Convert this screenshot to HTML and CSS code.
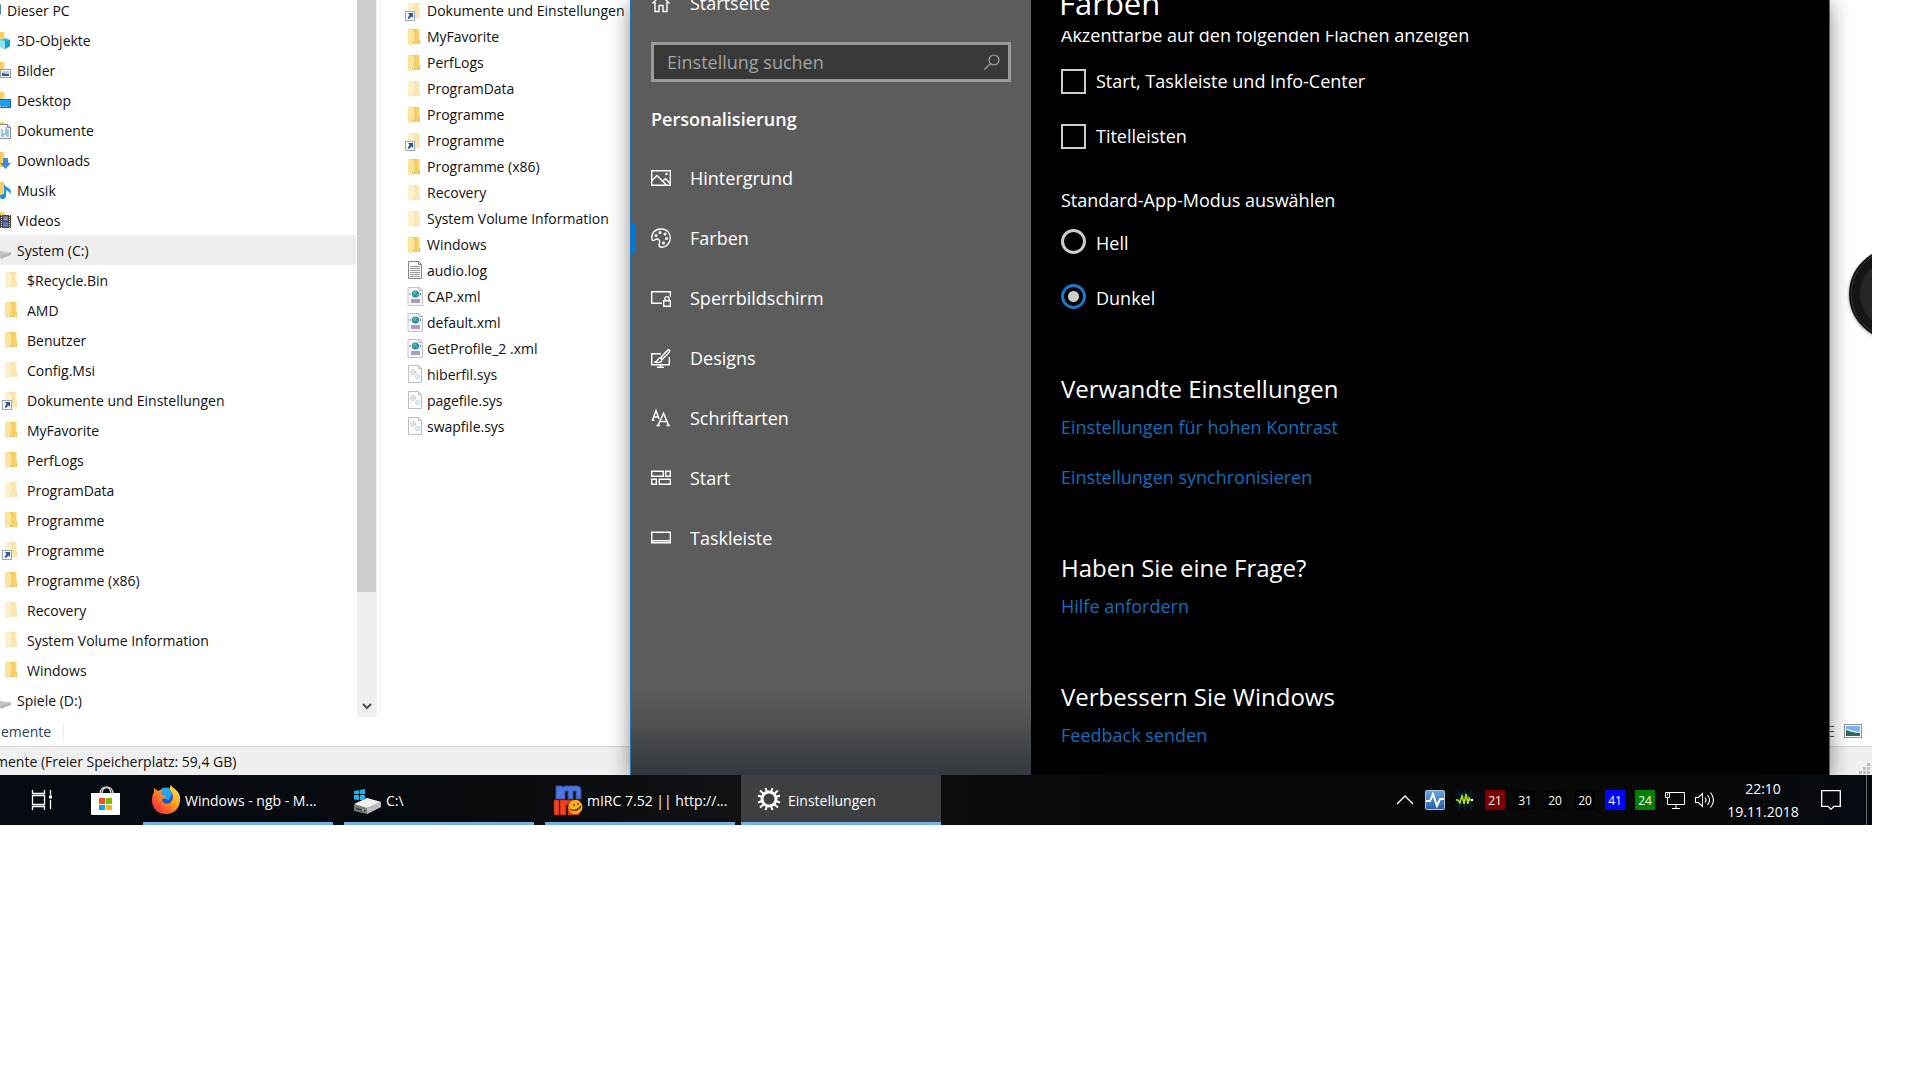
FILE: index.html
```html
<!DOCTYPE html>
<html lang="de">
<head>
    <meta charset="utf-8">
    <meta name="viewport" content="width=device-width, initial-scale=1.0">
    <title>Einstellungen</title>
    <link rel="stylesheet" href="styles.css">
</head>
<body>
    <!-- shared icons -->
    <svg class="defs" aria-hidden="true">
        <linearGradient id="gFolder" x1="0" x2="1"><stop offset="0" stop-color="#eec25a"/><stop offset="1" stop-color="#fbd772"/></linearGradient>
        <linearGradient id="gFox" x1="1" y1="0" x2="0" y2="1"><stop offset="0" stop-color="#fff44f"/><stop offset=".4" stop-color="#ffa41c"/><stop offset=".75" stop-color="#ff4a2f"/><stop offset="1" stop-color="#e31587"/></linearGradient>
        <linearGradient id="gDrive" x1="0" x2="1"><stop offset="0" stop-color="#9c9c9c"/><stop offset="1" stop-color="#e6e6e6"/></linearGradient>
        <linearGradient id="gMonitor" x1="0" y1="0" x2="0" y2="1"><stop offset="0" stop-color="#6ba7df"/><stop offset="1" stop-color="#1f5fa8"/></linearGradient>
        <symbol id="folder" viewBox="0 0 20 20">
            <path d="M8 2h7.500v9l.5 2v4H8z" fill="url(#gFolder)"/><path d="M15 12l1 1v4h-1z" fill="#f0c04c"/>
            <path d="M4 2h4.500l2 3v9L9 17v-3l-2 1v3.500L4 17z" fill="#fce49a"/>
        </symbol>
        <symbol id="arrow" viewBox="0 0 20 20">
            <rect x="1.500" y="10.500" width="9" height="9" fill="#fff" stroke="#9aa7b5"/>
            <path d="M4 12h5v5l-1.500-1.500L5 18l-1.500-1 2-3z" fill="#2a5ca0"/>
        </symbol>
        <symbol id="drive" viewBox="0 0 20 20">
            <path d="M0 13l9-2 11 1v2l-10 4-10-1z" fill="url(#gDrive)"/><path d="M10 15l10-3v3l-10 4z" fill="#b8b8b8"/>
        </symbol>
        <symbol id="pc" viewBox="0 0 20 20"><rect y="5" width="20" height="9" fill="#3d9bd6" stroke="#56697a"/></symbol>
        <symbol id="cube" viewBox="0 0 20 20">
            <use href="#folder" x="-2"/><path d="M9 10l6-2 4 2v6l-5 3-5-2z" fill="#2fc0dc"/><path d="M9 10l5 1v8l-5-2z" fill="#8fe3f0"/><path d="M14 11l5-1v6l-5 3z" fill="#1a9fbf"/>
        </symbol>
        <symbol id="pics" viewBox="0 0 20 20">
            <use href="#folder" x="-2"/><rect x="9.500" y="9.500" width="10" height="8" fill="#fff" stroke="#999"/><rect x="11" y="11" width="7" height="5" fill="#a9d2f2"/><path d="M11 13l4 1h3v2h-7z" fill="#2a5d8a"/>
        </symbol>
        <symbol id="desk" viewBox="0 0 20 20">
            <use href="#folder" x="-2"/><rect x="7.500" y="9.500" width="12" height="8" fill="#1a9dfc" stroke="#0a6bb5"/><path d="M9 16.500h8" stroke="#fff" stroke-dasharray="1 2"/>
        </symbol>
        <symbol id="docs" viewBox="0 0 20 20">
            <use href="#folder" x="-2"/><path d="M8.500 4.500h8l3 3v11h-11z" fill="#fff" stroke="#8c8c8c"/><path d="M16.500 4.500v3h3" fill="none" stroke="#8c8c8c"/>
            <path d="M10 10h2m2 0h4M10 12h2m2 0h4M10 14h8M10 16h3m2 0h3M14 8h2" stroke="#2a8fd0"/>
        </symbol>
        <symbol id="down" viewBox="0 0 20 20"><use href="#folder" x="-2"/><path d="M12 8h5v5h3l-5.500 6L9 13h3z" fill="#3b8de0"/></symbol>
        <symbol id="music" viewBox="0 0 20 20"><use href="#folder" x="-2"/><path d="M13 4c1 3 6 4 7 7l-1 4c0-3-2-4-4-5v6c0 4-6 4-6 1s3-3 4-3z" fill="#1494e6"/></symbol>
        <symbol id="video" viewBox="0 0 20 20">
            <use href="#folder" x="-2"/><rect x="9" y="5" width="11" height="13" fill="#444"/><path d="M10.500 5v13M18.500 5v13" stroke="#ddd" stroke-dasharray="1 1"/><path d="M12 6h5v5h-5zM12 12h5v5h-5z" fill="#5877c0"/><path d="M13 9l3-2v3z" fill="#dba53a"/>
        </symbol>
        <symbol id="log" viewBox="0 0 20 20">
            <path d="M4.500.5h10l3 3v14h-13z" fill="#fcfcfc" stroke="#848484"/><path d="M14.500.5v3h3" fill="none" stroke="#848484"/><path d="M6 5.500h10M6 7.500h10M6 9.500h10M6 11.500h10M6 13.500h10M6 15.500h10" stroke="#9b9b9b"/>
        </symbol>
        <symbol id="xml" viewBox="0 0 20 20">
            <path d="M4 .5h11l3.500 3v15H4z" fill="#f7f7fb" stroke="#c3c3cc"/><path d="M15 .5v3h3.500" fill="none" stroke="#b5b5b5"/>
            <circle cx="11.500" cy="7" r="3.600" fill="#2385b8"/><path d="M9 5l3-1 1 2-3 3zM12 8l2-1v3z" fill="#54c07a"/>
            <path d="M6.500 6l-1 1 1 1M16 6l1 1-1 1" fill="none" stroke="#777"/><path d="M7 12h9v4H7z" fill="#a99fb8"/>
        </symbol>
        <symbol id="sys" viewBox="0 0 20 20">
            <path d="M4.500.5h10l3 3v14h-13z" fill="#fcfcfc" stroke="#bdbdbd"/><path d="M14.500.5v3h3" fill="none" stroke="#bdbdbd"/>
            <circle cx="9" cy="7" r="2.500" fill="#f0f0f0" stroke="#a9b2bb" stroke-dasharray="1 .6"/><circle cx="9" cy="7" r=".8" fill="#a9b2bb"/><circle cx="13.500" cy="11.500" r="2" fill="#e7f0f7" stroke="#a9bccb" stroke-dasharray="1 .6"/>
        </symbol>
    </svg>

    <div class="screen">
        <div class="desktop">
            <div class="explorer">
                <div class="panes">
                    <ul class="tree">
                        <li class="l0"><svg><use href="#pc"/></svg>Dieser PC</li>
                        <li class="l1"><svg><use href="#cube"/></svg>3D-Objekte</li>
                        <li class="l1"><svg><use href="#pics"/></svg>Bilder</li>
                        <li class="l1"><svg><use href="#desk"/></svg>Desktop</li>
                        <li class="l1"><svg><use href="#docs"/></svg>Dokumente</li>
                        <li class="l1"><svg><use href="#down"/></svg>Downloads</li>
                        <li class="l1"><svg><use href="#music"/></svg>Musik</li>
                        <li class="l1"><svg><use href="#video"/></svg>Videos</li>
                        <li class="l1 selected"><svg><use href="#drive"/></svg>System (C:)</li>
                        <li><svg><use href="#folder" class="dim"/></svg>$Recycle.Bin</li>
                        <li><svg><use href="#folder"/></svg>AMD</li>
                        <li><svg><use href="#folder"/></svg>Benutzer</li>
                        <li><svg><use href="#folder" class="dim"/></svg>Config.Msi</li>
                        <li><svg><use href="#folder" class="dim"/><use href="#arrow"/></svg>Dokumente und Einstellungen</li>
                        <li><svg><use href="#folder"/></svg>MyFavorite</li>
                        <li><svg><use href="#folder"/></svg>PerfLogs</li>
                        <li><svg><use href="#folder" class="dim"/></svg>ProgramData</li>
                        <li><svg><use href="#folder"/></svg>Programme</li>
                        <li><svg><use href="#folder" class="dim"/><use href="#arrow"/></svg>Programme</li>
                        <li><svg><use href="#folder"/></svg>Programme (x86)</li>
                        <li><svg><use href="#folder" class="dim"/></svg>Recovery</li>
                        <li><svg><use href="#folder" class="dim"/></svg>System Volume Information</li>
                        <li><svg><use href="#folder"/></svg>Windows</li>
                        <li class="l1"><svg><use href="#drive"/></svg>Spiele (D:)</li>
                    </ul>
                    <div class="scrollbar">
                        <div class="thumb"></div>
                        <button class="scroll-down" aria-label="Nach unten"><svg viewBox="0 0 10 8"><path d="M1 1l4 4 4-4" fill="none" stroke="#505050" stroke-width="2"/></svg></button>
                    </div>
                    <ul class="files">
                        <li><svg><use href="#folder" class="dim"/><use href="#arrow"/></svg>Dokumente und Einstellungen</li>
                        <li><svg><use href="#folder"/></svg>MyFavorite</li>
                        <li><svg><use href="#folder"/></svg>PerfLogs</li>
                        <li><svg><use href="#folder" class="dim"/></svg>ProgramData</li>
                        <li><svg><use href="#folder"/></svg>Programme</li>
                        <li><svg><use href="#folder" class="dim"/><use href="#arrow"/></svg>Programme</li>
                        <li><svg><use href="#folder"/></svg>Programme (x86)</li>
                        <li><svg><use href="#folder" class="dim"/></svg>Recovery</li>
                        <li><svg><use href="#folder" class="dim"/></svg>System Volume Information</li>
                        <li><svg><use href="#folder"/></svg>Windows</li>
                        <li><svg><use href="#log"/></svg>audio.log</li>
                        <li><svg><use href="#xml"/></svg>CAP.xml</li>
                        <li><svg><use href="#xml"/></svg>default.xml</li>
                        <li><svg><use href="#xml"/></svg>GetProfile_2 .xml</li>
                        <li><svg><use href="#sys"/></svg>hiberfil.sys</li>
                        <li><svg><use href="#sys"/></svg>pagefile.sys</li>
                        <li><svg><use href="#sys"/></svg>swapfile.sys</li>
                    </ul>
                </div>
                <div class="count">
                    <span class="count-text">emente</span>
                    <svg class="views" viewBox="0 0 36 16">
                        <path d="M0 2.500h6M0 7.500h6M0 12.500h6" stroke="#555"/>
                        <rect x="16.500" y=".5" width="17" height="13" fill="#fff" stroke="#8b95a0"/><rect x="18" y="2" width="14" height="10" fill="#7db4ee"/><path d="M18 5c5 0 8 3 14 3v1H18z" fill="#e5f2fb"/><path d="M18 6c4 1 8 3 14 3v3H18z" fill="#2f6a5e"/>
                    </svg>
                </div>
                <div class="status">
                    <span class="status-text">mente (Freier Speicherplatz: 59,4 GB)</span>
                    <svg class="grip" viewBox="0 0 12 12"><path d="M9 0h3v3H9zM5 4h3v3H5zM9 4h3v3H9zM1 8h3v3H1zM5 8h3v3H5zM9 8h3v3H9z" fill="#bdbdbd"/></svg>
                </div>
            </div>

            <div class="gadget"></div>

            <div class="settings">
                <nav class="nav">
                    <a href="#" class="nav-item"><svg viewBox="0 0 20 20"><path d="M1.500 10.500L10 2l8.500 8.500M4 9v9.500h4v-6h4v6h4V9"/></svg>Startseite</a>
                    <div class="search">
                        <input type="text" placeholder="Einstellung suchen" aria-label="Einstellung suchen">
                        <svg viewBox="0 0 16 16"><circle cx="10" cy="6" r="5"/><path d="M6.300 9.700L.5 15.500"/></svg>
                    </div>
                    <h3>Personalisierung</h3>
                    <a href="#" class="nav-item"><svg viewBox="0 0 20 20"><path d="M.7 2.700h18.600v14.600H.7zM1 12.500l5-5 9.500 9.500M12 13l2.500-2.500 4.500 5"/><circle cx="15.500" cy="6" r=".6"/></svg>Hintergrund</a>
                    <a href="#" class="nav-item active"><svg viewBox="0 0 20 20"><path d="M1 11C0 5 4 1 10 1s9.300 4 9.300 9-4 9.300-8.300 9.300c-4 0-3-3-2.500-4.500.6-2-.8-3.800-2.500-3.800S3 13 1.800 12.600C1.200 12.300 1 12 1 11z"/><circle cx="5" cy="7.500" r=".8"/><circle cx="9" cy="4.500" r=".8"/><circle cx="14" cy="6" r=".8"/><circle cx="15.500" cy="10.500" r=".8"/><circle cx="12.500" cy="15" r=".8"/></svg>Farben</a>
                    <a href="#" class="nav-item"><svg viewBox="0 0 20 20"><path d="M11 15.300H.7V3.700h18.600v5M12.700 12.700h6.600v5.600h-6.600zM14 12.500v-2c0-2.500 4-2.500 4 0v2"/></svg>Sperrbildschirm</a>
                    <a href="#" class="nav-item"><svg viewBox="0 0 20 20"><path d="M10 5.700H.7v11h17.600V9M9.500 17v2M6 19.300h7M18.500 2c-1-1-2 0-9 8l1.500 1.500C18 5 19.500 3 18.500 2zM9.300 10c-3 0-2 3-5 4 3 1 6.500.5 6.700-2.500"/></svg>Designs</a>
                    <a href="#" class="nav-item"><svg viewBox="0 0 20 20"><path d="M1.500 12L5 2.500 8 11M.8 12.300h2.500M3 9h4M7 17.300l5.500-12 5 12M5.500 17.500h3.500M15.500 17.500h3.500M9 13.500h6.500M13 6l4.500 11"/></svg>Schriftarten</a>
                    <a href="#" class="nav-item"><svg viewBox="0 0 20 20"><path d="M.7 3.200h11.600v5.100H.7zM14.700 3.200h4.600v5.100h-4.600zM.7 11.200h4.600v5.100H.7zM8.200 11.200h11.100v5.100H8.200z"/></svg>Start</a>
                    <a href="#" class="nav-item"><svg viewBox="0 0 20 20"><path d="M.7 4.200h18.600v10.600H.7zM1 12.700h18"/></svg>Taskleiste</a>
                </nav>
                <main class="content">
                    <h1>Farben</h1>
                    <div class="scroll">
                        <p class="lead">Akzentfarbe auf den folgenden Flächen anzeigen</p>
                        <div class="choices boxes">
                            <label><input type="checkbox"><span>Start, Taskleiste und Info-Center</span></label>
                            <label><input type="checkbox"><span>Titelleisten</span></label>
                        </div>
                        <p>Standard-App-Modus auswählen</p>
                        <div class="choices modes">
                            <label><input type="radio" name="mode"><span>Hell</span></label>
                            <label><input type="radio" name="mode" checked><span>Dunkel</span></label>
                        </div>
                        <section>
                            <h2>Verwandte Einstellungen</h2>
                            <a href="#">Einstellungen für hohen Kontrast</a>
                            <a href="#">Einstellungen synchronisieren</a>
                        </section>
                        <section>
                            <h2>Haben Sie eine Frage?</h2>
                            <a href="#">Hilfe anfordern</a>
                        </section>
                        <section>
                            <h2>Verbessern Sie Windows</h2>
                            <a href="#">Feedback senden</a>
                        </section>
                    </div>
                </main>
            </div>
        </div>

        <div class="taskbar">
            <button class="icon-btn" aria-label="Aktive Anwendungen"><svg width="22" height="22" viewBox="0 0 22 22"><path d="M1.500 1v3.500h12V1M1.500 6.500h12v9h-12zM1.500 21v-3.500h12V21M19.500 1v5M19.500 11v9" fill="none" stroke="#fff" stroke-width="1.300"/><path d="M18 6.500h3v3h-3z" fill="#fff"/></svg></button>
            <button class="icon-btn" aria-label="Store"><svg width="30" height="30" viewBox="0 0 30 30"><path d="M10 9c0-9 11-9 11 0M12 9c0-9 11-9 11 0" fill="none" stroke="#ccc" stroke-width="1.500"/><path d="M1 8h29v21q0 1-1 1H2q-1 0-1-1z" fill="#fff"/><path d="M9 13h6v6H9z" fill="#f25022"/><path d="M16 13h6v6h-6z" fill="#7fba00"/><path d="M9 20h6v5H9z" fill="#00a4ef"/><path d="M16 20h6v5h-6z" fill="#ffb900"/></svg></button>
            <button class="task"><svg viewBox="0 0 30 30"><circle cx="15" cy="14" r="11" fill="#1d56c4"/><path d="M10 4c5-3 10-1 12 3l-4 8-8-2z" fill="#24a3ee"/><path d="M20 0c1 3 8 5 9 12 1 10-5 17-14 17S1 23 1 15c0-4 1-6 2-8V3l4 3c2-1 4-1 5 0-2 1-2 3-1 4l4 1c0 2-3 2-4 4 1 4 6 5 9 2 3-4 2-8 0-11-1-2-2-3 0-6z" fill="url(#gFox)"/></svg><span>Windows - ngb - M...</span></button>
            <button class="task"><svg viewBox="0 0 30 30"><path d="M2 20l13-7 14 4v5l-14 7-13-3z" fill="#777"/><path d="M2 19l13-6 14 4-14 6z" fill="#f0f0f0"/><path d="M15 23l14-6v5l-14 7z" fill="#bcbcbc"/><path d="M4 23l9 2.500v1L4 24z" fill="#222"/><path d="M10 24h2v2h-2z" fill="#4ad35e"/><path d="M2 6l5-1v4H2zM8 5l5-1v5H8zM2 10h5v5l-5-.5zM8 10h5v5H8z" fill="#1cb5f0"/></svg><span>C:\</span></button>
            <button class="task"><svg viewBox="0 0 30 30"><path d="M3 14V1h6l1 1 2-1h13q3 1 3 4v9h-5V6h-3v8h-5V6h-3v8z" fill="#4f74dc" stroke="#2c4cad"/><path d="M1 15h5v15H1zM7 15h10v5h-4v10H7zM15 15h11v6h-6v4h6v5H15z" fill="#f0421c" stroke="#a52008" stroke-width=".7"/><circle cx="22.500" cy="22" r="7" fill="#fbb417"/><path d="M17 24q6 4 11-3M21 19v2M25 18v2" fill="none" stroke="#6b3604" stroke-width="1.500"/></svg><span>mIRC 7.52 || http://...</span></button>
            <button class="task current"><svg viewBox="0 0 30 30"><circle cx="15" cy="14" r="7" fill="none" stroke="#fff" stroke-width="3"/><path d="M11.500 3l1.500 4M18.500 3L17 7M11.500 25l1.500-4M18.500 25L17 21M4 10.500l4 1.500M4 17.500L8 16M26 10.500L22 12M26 17.500L22 16M6 5.500l4 3.500M24 5.500L20 9M6 22.500l4-3.500M24 22.500L20 19" stroke="#fff" stroke-width="2"/></svg><span>Einstellungen</span></button>

            <div class="tray">
                <button class="tray-btn" aria-label="Ausgeblendete Symbole"><svg viewBox="0 0 20 20"><path d="M2 14l8-8 8 8" fill="none" stroke="#fff" stroke-width="1.400"/></svg></button>
                <span class="tray-btn"><svg viewBox="0 0 20 20"><rect x=".5" y=".5" width="19" height="19" rx="1" fill="url(#gMonitor)" stroke="#a8c4de"/><path d="M1 11h4l3-7 4 12 3-7h4" fill="none" stroke="#fff" stroke-width="2"/></svg></span>
                <span class="tray-btn"><svg viewBox="0 0 20 20"><rect width="20" height="20" fill="#02090d"/><path d="M4 0v20M10 0v20M16 0v20M0 4h20M0 10h20M0 16h20" stroke="#0c2432"/><path d="M1 10h2l2 3 2-8 2 9 2-10 2 10 1-6 1 2h2" fill="none" stroke="#b3dd20" stroke-width="1.500"/><circle cx="17" cy="10" r="1.200" fill="#fff"/></svg></span>
                <span class="tray-btn"><b class="temp red">21</b></span>
                <span class="tray-btn"><b class="temp">31</b></span>
                <span class="tray-btn"><b class="temp">20</b></span>
                <span class="tray-btn"><b class="temp">20</b></span>
                <span class="tray-btn"><b class="temp blue">41</b></span>
                <span class="tray-btn"><b class="temp green">24</b></span>
                <button class="tray-btn" aria-label="Netzwerk"><svg viewBox="0 0 20 20"><path d="M4 2.500h15.500v12H2.500V8M.5 2.500h4v5h-4zM2.500 3.500v2M11 15v3M7 18.500h8" fill="none" stroke="#fff"/></svg></button>
                <button class="tray-btn" aria-label="Lautsprecher"><svg viewBox="0 0 20 20"><path d="M.5 7.500h3l4-4v13l-4-4h-3zM10 7.500q2 2.500 0 5M12.500 5q4 5 0 10M15.500 2.500q6 7.500 0 15" fill="none" stroke="#fff" stroke-width="1.100"/></svg></button>
                <button class="clock"><span>22:10</span><span>19.11.2018</span></button>
                <button class="notes" aria-label="Info-Center"><svg viewBox="0 0 20 20"><path d="M.7.700h18.600v15.600H13l-3 3-3-3H.7z" fill="none" stroke="#fff" stroke-width="1.300"/></svg></button>
                <button class="show-desktop" aria-label="Desktop anzeigen"></button>
            </div>
        </div>
    </div>
</body>
</html>
```
FILE: styles.css
```css
*{
    box-sizing: border-box;
}
body{
    margin: 0;
    background: #fff;
    color: #111;
    font: 14px/20px "Open Sans", "Noto Sans", sans-serif;
}
h1, h2, h3, p, ul{
    margin: 0;
    padding: 0;
}
ul{
    list-style: none;
}
button{
    border: none;
    padding: 0;
    background: none;
    color: #fff;
    font: inherit;
}
a{
    text-decoration: none;
}
.defs{
    position: absolute;
    width: 0;
    height: 0;
}
.screen{
    margin-right: 2.5%;
}
.desktop{
    position: relative;
    overflow: hidden;
    background: #fff;
}

/* explorer */
.panes{
    display: flex;
}
.panes li{
    display: flex;
    align-items: center;
    white-space: nowrap;
}
.panes li svg{
    flex: none;
    width: 20px;
    height: 20px;
}
.dim{
    opacity: .5;
}
.tree{
    width: 356px;
    margin: -5px 0 2px;
}
.tree li{
    height: 30px;
    padding: 2px 0 0 1px;
    gap: 6px;
}
.tree li svg{
    margin-bottom: 2px;
}
.tree .l1 svg{
    margin-left: -10px;
}
.tree .l0 svg{
    margin-left: -20px;
}
.tree .selected{
    background: #eee;
}
.scrollbar{
    display: flex;
    flex-direction: column;
    width: 20px;
    margin: 0 2px 0 1px;
    background: #f0f0f0;
}
.thumb{
    height: 592px;
    margin-right: 1px;
    background: #cdcdcd;
}
.scroll-down{
    height: 20px;
    margin: auto 1px 1px 0;
}
.scroll-down svg{
    width: 10px;
    height: 8px;
}
.files{
    flex: 1;
    margin-top: -2px;
    padding-left: 24px;
    border-left: 1px solid #f3f3f3;
}
.files li{
    height: 26px;
    gap: 3px;
}
.count, .status{
    display: flex;
    align-items: center;
    justify-content: space-between;
    height: 29px;
}
.count{
    color: #2b4261;
}
.count-text{
    padding: 0 12px 0 1px;
    border-right: 1px solid #eee;
}
.views{
    width: 36px;
    height: 16px;
    margin-right: 8px;
}
.status{
    background: #f0f0f0;
    border-top: 1px solid #d7d7d7;
}
.status-text{
    margin-left: -5px;
    padding-top: 2px;
}
.grip{
    align-self: flex-end;
    width: 12px;
    height: 12px;
    margin-right: 2px;
}
.gadget{
    position: absolute;
    top: 248px;
    right: -69px;
    width: 92px;
    height: 92px;
    border: 2px solid #111;
    border-radius: 50%;
    background: radial-gradient(circle, #262626 0 34px, #151515 36px 43px, #4c5a63 44px);
    box-shadow: 0 1px 3px rgba(0,0,0,.5);
}

/* settings window */
.settings{
    position: absolute;
    top: 0;
    bottom: 0;
    left: 630px;
    right: 42px;
    display: flex;
    border: solid #2272b4;
    border-width: 0 1px;
    background: #000;
    color: #fff;
    font-size: 18px;
    line-height: 24px;
    box-shadow: 0 4px 20px rgba(0,0,0,.45);
}
.nav{
    flex: none;
    width: 400px;
    overflow: hidden;
    background: linear-gradient(to top, #33383e, #44474a 32px, #545454 60px, #5c5c5c 90px);
}
.nav-item{
    display: flex;
    align-items: center;
    gap: 19px;
    height: 60px;
    padding-left: 20px;
    color: #fff;
}
.nav-item:first-child{
    margin-top: -27px;
    margin-bottom: 9px;
}
.nav-item svg{
    width: 20px;
    height: 20px;
    fill: none;
    stroke: #fff;
    stroke-width: 1.400;
}
.nav-item.active{
    padding-left: 0;
}
.nav-item.active::before{
    content: "";
    width: 5px;
    height: 30px;
    margin-right: -4px;
    background: #0078d7;
}
.search{
    display: flex;
    align-items: center;
    height: 40px;
    margin: 0 20px 8px;
    padding-right: 8px;
    border: 3px solid #9b9b9b;
    background: #383838;
}
.search input{
    flex: 1;
    min-width: 0;
    padding: 0 0 0 13px;
    border: none;
    outline: none;
    background: none;
    color: #fff;
    font: inherit;
}
.search input::placeholder{
    color: #a3a3a3;
    opacity: 1;
}
.search svg{
    width: 16px;
    height: 16px;
    fill: none;
    stroke: #a3a3a3;
    stroke-width: 1.200;
}
.nav h3{
    padding-left: 20px;
    font-size: 18px;
    font-weight: 600;
    line-height: 58px;
}
.content{
    flex: 1;
    padding-left: 30px;
}
.content h1{
    height: 31px;
    margin-left: -2px;
    font-size: 31px;
    font-weight: 400;
    line-height: 6px;
}
.scroll{
    overflow: hidden;
}
.lead{
    margin-top: -8px;
}
.choices{
    display: flex;
    flex-direction: column;
    gap: 30px;
}
.boxes{
    margin: 22px 0 39px;
}
.modes{
    margin-top: 17px;
}
.choices label{
    display: flex;
    align-items: center;
    gap: 10px;
    height: 25px;
}
.boxes span{
    padding-bottom: 2px;
}
.modes span{
    padding-top: 2px;
}
.choices input{
    appearance: none;
    width: 25px;
    height: 25px;
    margin: 0;
    border: 2px solid #ccc;
}
.choices input[type=radio]{
    border-width: 3px;
    border-radius: 50%;
}
.choices input[type=radio]:checked{
    border-color: #1a78c8;
    background: radial-gradient(circle, #ccc 5px, transparent 6px);
}
.content section{
    margin-top: 62px;
}
.modes + section{
    margin-top: 63px;
}
.content h2{
    margin-bottom: 9px;
    font-size: 24px;
    font-weight: 400;
    line-height: 34px;
}
.content section a{
    display: block;
    margin-bottom: 26px;
    color: #106ebe;
}
.content section a:last-child{
    margin-bottom: 0;
}

/* taskbar */
.taskbar{
    display: flex;
    height: 50px;
    padding-left: 12px;
    background: linear-gradient(to right, #050a12, #080a0e 25%, #101112 40%, #080808 60%, #080808 92%, #050a12);
    color: #fff;
}
.icon-btn{
    display: flex;
    align-items: center;
    justify-content: center;
    width: 60px;
    margin-right: 3px;
}
.task{
    display: flex;
    align-items: center;
    gap: 4px;
    width: 190px;
    margin: 0 6px 0 5px;
    padding: 3px 0 0 8px;
    border-bottom: 3px solid #76b0e6;
    white-space: nowrap;
}
.task span{
    padding-top: 2px;
}
.task svg{
    flex: none;
    width: 30px;
    height: 30px;
}
.task.current{
    width: 200px;
    margin: 0;
    padding-left: 13px;
    background: #3e3f40;
}
.tray{
    display: flex;
    align-items: center;
    margin-left: auto;
}
.tray-btn{
    display: flex;
    justify-content: center;
    width: 30px;
}
.tray-btn svg, .notes svg{
    width: 20px;
    height: 20px;
}
.temp{
    width: 20px;
    height: 20px;
    background: #000;
    font-size: 12px;
    font-weight: 400;
    line-height: 21px;
    text-align: center;
}
.red{
    background: #7f0000;
}
.blue{
    background: #00f;
}
.green{
    background: #008000;
}
.clock{
    width: 86px;
    line-height: 23px;
}
.clock span{
    display: block;
}
.notes{
    display: flex;
    justify-content: center;
    width: 50px;
}
.show-desktop{
    align-self: stretch;
    width: 6px;
    margin-left: 10px;
    border-left: 1px solid #666;
}
```
